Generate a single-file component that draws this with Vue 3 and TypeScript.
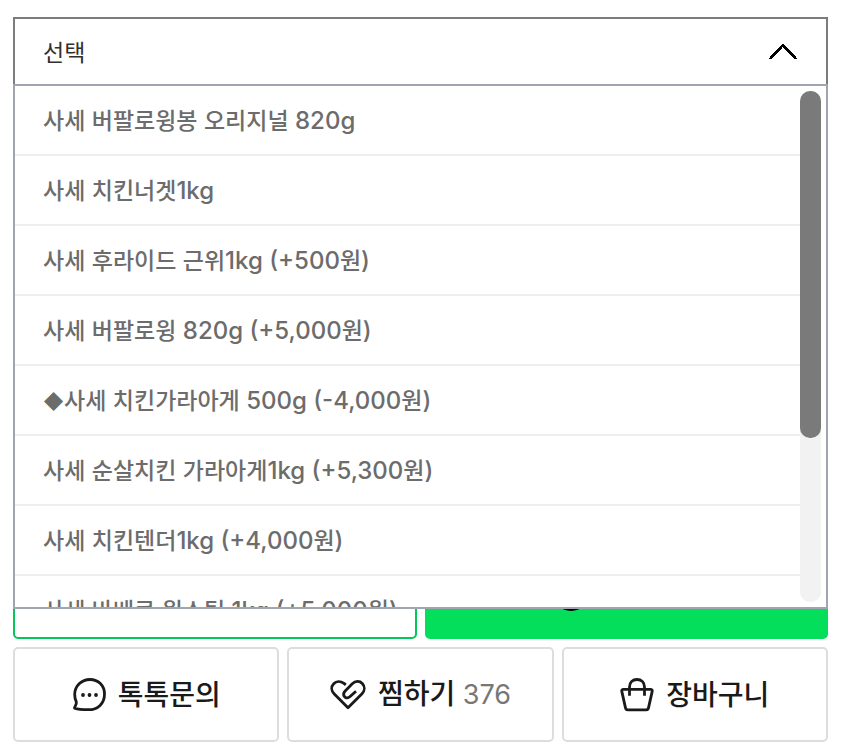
<script setup lang="ts">
import { computed, ref } from 'vue'

interface Option {
  name: string
  extra?: string
}

const options: Option[] = [
  { name: '사세 버팔로윙봉 오리지널 820g' },
  { name: '사세 치킨너겟1kg' },
  { name: '사세 후라이드 근위1kg', extra: '(+500원)' },
  { name: '사세 버팔로윙 820g', extra: '(+5,000원)' },
  { name: '◆사세 치킨가라아게 500g', extra: '(-4,000원)' },
  { name: '사세 순살치킨 가라아게1kg', extra: '(+5,300원)' },
  { name: '사세 치킨텐더1kg', extra: '(+4,000원)' },
  { name: '사세 바베큐 윙스틱 1kg', extra: '(+5,000원)' },
]

interface Run {
  text: string
  kind: 'hangul' | 'latin' | 'mark'
}

// Splits a label by script, so that figures and Hangul can be sized to look even.
function runs(option: Option): Run[] {
  const text = option.extra ? `${option.name} ${option.extra}` : option.name
  return text
    .split(/([\x20-\x7e]+|◆)/)
    .filter(Boolean)
    .map((part) => ({
      text: part,
      kind: part === '◆' ? 'mark' : /^[\x20-\x7e]/.test(part) ? 'latin' : 'hangul',
    }))
}

const open = ref(true)
const selected = ref<Option | null>(null)
const wishCount = ref(376)

const label = computed(() => selected.value?.name ?? '선택')

function choose(option: Option) {
  selected.value = option
  open.value = false
}
</script>

<template>
  <main class="page">
    <div class="picker">
      <button
        class="picker-head"
        type="button"
        aria-haspopup="listbox"
        aria-controls="option-list"
        :aria-expanded="open"
        @click="open = !open"
      >
        <span>{{ label }}</span>
        <svg class="chevron" viewBox="0 0 28 18" shape-rendering="crispEdges" aria-hidden="true">
          <path d="M1 16 14 2l13 14" />
        </svg>
      </button>

      <div v-if="open" class="dropdown">
        <ul id="option-list" class="options" role="listbox">
          <li
            v-for="option in options"
            :key="option.name"
            class="option"
            role="option"
            tabindex="0"
            :aria-selected="option === selected"
            @click="choose(option)"
            @keydown.enter="choose(option)"
          >
            <span><span v-for="(run, i) in runs(option)" :key="i" :class="run.kind">{{ run.text }}</span></span>
          </li>
        </ul>
        <div class="track" aria-hidden="true"><div class="thumb"></div></div>
      </div>
    </div>

    <div class="actions">
      <div class="row">
        <button class="buy" type="button" aria-label="선물하기"></button>
        <button class="buy solid" type="button" aria-label="구매하기">
          <svg class="pay" viewBox="0 0 38 38" aria-hidden="true">
            <circle cx="19" cy="19" r="19" />
          </svg>
        </button>
      </div>

      <div class="row">
        <button class="tool" type="button">
          <svg class="icon" viewBox="0 0 34 34" aria-hidden="true">
            <path
              d="M18 1.500C26.300 1.500 32.500 7.600 32.500 16C32.500 25.500 26 31.700 16.500 31.700C11 31.700 6 31.400 2.500 30.200C2.300 28.300 5 27 4.300 23.900C3.300 21.800 2.700 19.500 2.700 16.500C2.700 8 9.500 1.500 18 1.500Z"
            />
            <g class="dots">
              <circle cx="11" cy="17" r="1.900" />
              <circle cx="17.500" cy="17" r="1.900" />
              <circle cx="24" cy="17" r="1.900" />
            </g>
          </svg>
          <span>톡톡문의</span>
        </button>

        <button class="tool" type="button">
          <svg class="icon wide" viewBox="0 0 36 34" aria-hidden="true">
            <path
              d="M26 13.200 19.800 18.800C17.500 20.900 14.800 19.700 14 17.900C13.100 16 13.700 14.400 15.200 12.900L22 6C25.500 2.600 29.800 2.800 32.300 5.500C35 8.400 34.900 12.700 32 15.800L18 29.800L4.300 16.100C1.100 12.800 1 8.500 3.700 5.700C6.300 3 10.500 2.900 14 5.400L15.800 6.900"
            />
          </svg>
          <span>찜하기 <span class="count">{{ wishCount }}</span></span>
        </button>

        <button class="tool" type="button">
          <svg class="icon" viewBox="0 0 34 34" aria-hidden="true">
            <path
              d="M3.500 11.300H30.500C31.800 11.300 32.500 12.200 32.200 13.400L28.500 29.900C28.200 31.200 27.500 31.800 26.300 31.800H7.700C6.500 31.800 5.800 31.200 5.500 29.900L1.800 13.400C1.500 12.200 2.200 11.300 3.500 11.300Z"
            />
            <path d="M9.500 17.800V9C9.500 4.500 12.700 1.500 17 1.500S24.500 4.500 24.500 9V17.800" />
          </svg>
          <span>장바구니</span>
        </button>
      </div>
    </div>
  </main>
</template>

<style>
body {
  background: #fff;
}
</style>

<style scoped>
* {
  box-sizing: border-box;
}

.page {
  padding: 17px 21px 13px 13px;
  font-family: Inter, 'Noto Sans CJK KR', sans-serif;
  font-size: 23px;
  font-weight: 500;
  line-height: 32px;
}

button {
  margin: 0;
  font: inherit;
  cursor: pointer;
}

.picker {
  position: relative;
}

.picker-head {
  display: flex;
  align-items: center;
  justify-content: space-between;
  width: 100%;
  height: 69px;
  padding: 4px 29px 2px 28px;
  border: 2px solid #7c7c7c;
  background: #fff;
  color: #303030;
  font-weight: 400;
  text-align: left;
}

.chevron {
  width: 28px;
  height: 18px;
  margin-bottom: 2px;
  fill: none;
  stroke: #000;
  stroke-width: 2.700;
}

.dropdown {
  position: absolute;
  z-index: 1;
  top: calc(100% - 2px);
  right: 0;
  left: 0;
  display: flex;
  height: 525px;
  padding-right: 5px;
  border: 2px solid #a0a5b1;
  background: #fff;
}

.options {
  flex: 1;
  margin: 0;
  padding: 0;
  overflow-y: auto;
  list-style: none;
  scrollbar-width: none;
}

.option {
  display: flex;
  align-items: center;
  height: 70px;
  padding: 2px 28px 0;
  border-bottom: 2px solid #eee;
  color: #6c6c6c;
  cursor: pointer;
  white-space: pre-wrap;
}

.mark {
  font-size: 20px;
}

.latin {
  font-size: 24px;
}

.track {
  width: 21px;
  margin: 5px 0;
  border-radius: 10px;
  background: #f2f2f2;
}

.thumb {
  height: 68%;
  border-radius: 10px;
  background: #7a7a7a;
}

.actions {
  display: flex;
  flex-direction: column;
  gap: 8px;
  margin-top: 458px;
}

.row {
  display: flex;
  gap: 8px;
}

.buy,
.tool {
  display: flex;
  flex: 1;
  align-items: center;
  justify-content: center;
  height: 95px;
  border-radius: 5px;
  background: #fff;
}

.buy {
  border: 2px solid #03c75a;
}

.solid {
  border-color: #03de5b;
  background: #03de5b;
}

.pay {
  width: 38px;
  height: 38px;
  margin-right: 110px;
}

.tool {
  gap: 12px;
  padding: 0;
  border: 2px solid #ddd;
  color: #1a1a1a;
  font-size: 28px;
}

.icon {
  width: 34px;
  height: 34px;
  fill: none;
  stroke: #1a1a1a;
  stroke-linejoin: round;
  stroke-width: 2.800;
}

.wide {
  width: 36px;
}

.dots {
  fill: #1a1a1a;
  stroke: none;
}

.count {
  color: #777;
  font-size: 27px;
  font-weight: 400;
}
</style>
